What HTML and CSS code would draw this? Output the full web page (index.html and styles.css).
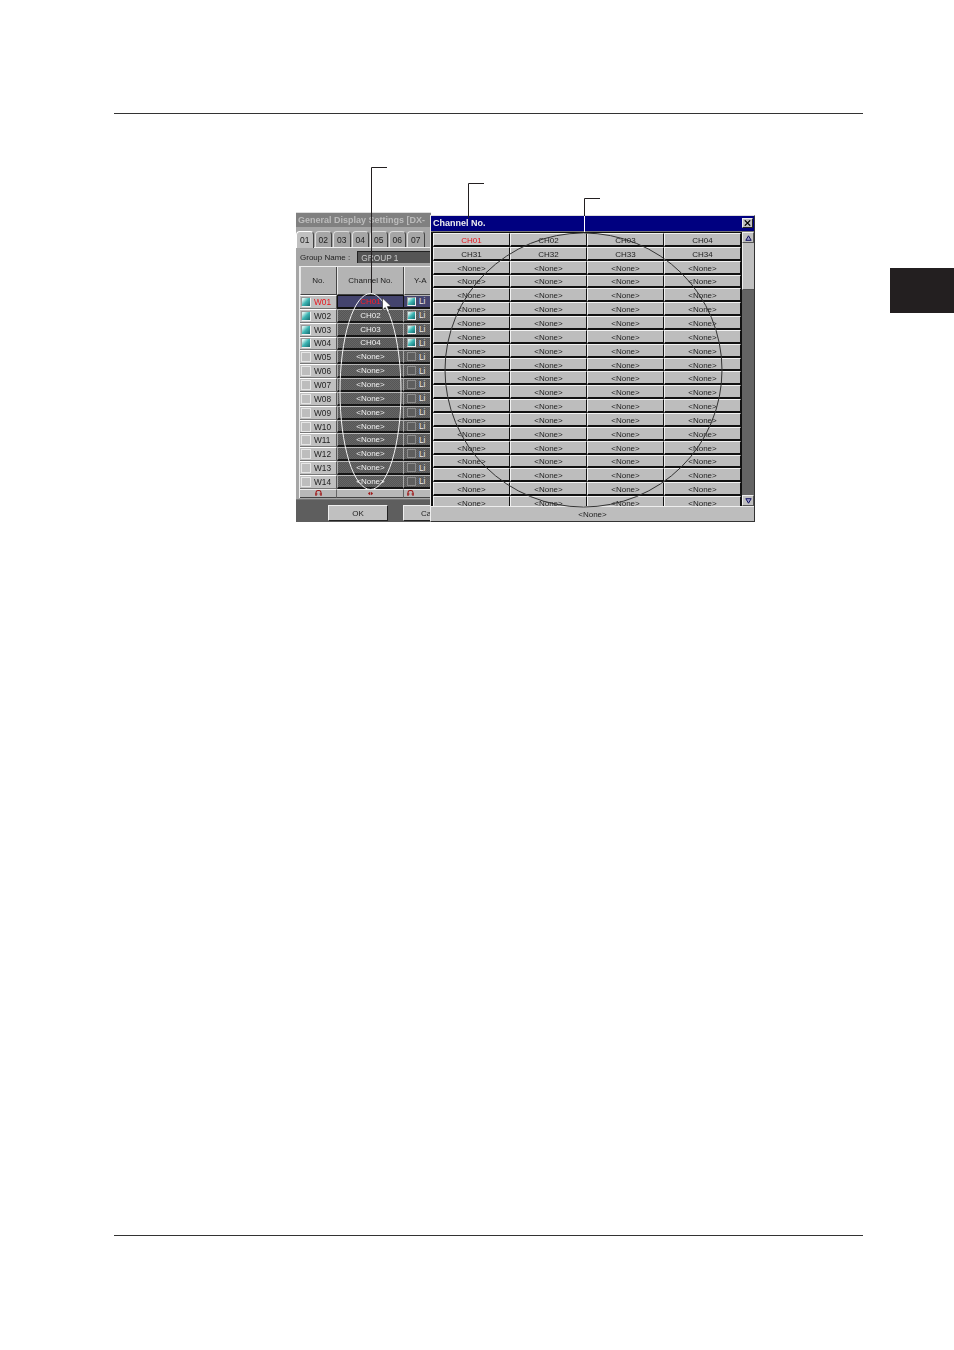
FILE: index.html
```html
<!DOCTYPE html>
<html lang="en">
<head>
<meta charset="utf-8">
<title>Channel No.</title>
<link rel="stylesheet" href="styles.css">
</head>
<body>
<div class="page">
  <div class="rule rule-top"></div>
  <div class="chapter-tab"></div>
  <div class="figure">
    <section class="win-settings">
      <div class="set-title">General Display Settings [DX-</div>
      <div class="set-body">
        <div class="tabs">
          <span class="tab tab-on">01</span><span class="tab">02</span><span class="tab">03</span><span class="tab">04</span><span class="tab">05</span><span class="tab">06</span><span class="tab">07</span>
        </div>
        <div class="group"><span class="group-label">Group Name :</span><span class="group-input">GROUP 1</span></div>
        <div class="table">
          <div class="th">No.</div><div class="th">Channel No.</div><div class="th">Y-A</div>
          <div class="no sel"><i class="cb on"></i>W01</div><div class="ch cur">CH01</div><div class="ya cur2"><i class="cb on"></i>Li</div>
          <div class="no"><i class="cb on"></i>W02</div><div class="ch">CH02</div><div class="ya"><i class="cb on"></i>Li</div>
          <div class="no"><i class="cb on"></i>W03</div><div class="ch">CH03</div><div class="ya"><i class="cb on"></i>Li</div>
          <div class="no"><i class="cb on"></i>W04</div><div class="ch">CH04</div><div class="ya"><i class="cb on"></i>Li</div>
          <div class="no"><i class="cb"></i>W05</div><div class="ch">&lt;None&gt;</div><div class="ya"><i class="cb off"></i>Li</div>
          <div class="no"><i class="cb"></i>W06</div><div class="ch">&lt;None&gt;</div><div class="ya"><i class="cb off"></i>Li</div>
          <div class="no"><i class="cb"></i>W07</div><div class="ch">&lt;None&gt;</div><div class="ya"><i class="cb off"></i>Li</div>
          <div class="no"><i class="cb"></i>W08</div><div class="ch">&lt;None&gt;</div><div class="ya"><i class="cb off"></i>Li</div>
          <div class="no"><i class="cb"></i>W09</div><div class="ch">&lt;None&gt;</div><div class="ya"><i class="cb off"></i>Li</div>
          <div class="no"><i class="cb"></i>W10</div><div class="ch">&lt;None&gt;</div><div class="ya"><i class="cb off"></i>Li</div>
          <div class="no"><i class="cb"></i>W11</div><div class="ch">&lt;None&gt;</div><div class="ya"><i class="cb off"></i>Li</div>
          <div class="no"><i class="cb"></i>W12</div><div class="ch">&lt;None&gt;</div><div class="ya"><i class="cb off"></i>Li</div>
          <div class="no"><i class="cb"></i>W13</div><div class="ch">&lt;None&gt;</div><div class="ya"><i class="cb off"></i>Li</div>
          <div class="no"><i class="cb"></i>W14</div><div class="ch">&lt;None&gt;</div><div class="ya"><i class="cb off"></i>Li</div>
          <div class="foot"><svg class="ico" viewBox="0 0 7 7"><path d="M1 6V2.500a2.500 2 0 0 1 5 0V6M0 4h2.500M4.500 4H7"/></svg></div>
          <div class="foot"><svg class="ico" viewBox="0 0 7 7"><path d="M3 2 1 3.500 3 5zM4 2l2 1.500L4 5z"/></svg></div>
          <div class="foot"><svg class="ico" viewBox="0 0 7 7"><path d="M1 6V2.500a2.500 2 0 0 1 5 0V6M0 4h2.500M4.500 4H7"/></svg></div>
        </div>
      </div>
      <div class="set-actions"><span class="btn btn-ok">OK</span><span class="btn btn-cut">Ca</span></div>
    </section>

    <section class="win-channel">
      <div class="ch-title"><span>Channel No.</span><span class="close"><svg viewBox="0 0 9 7"><path d="M1 0l7 7M8 0 1 7"/></svg></span></div>
      <div class="ch-main">
        <div class="ch-grid">
          <div class="cell cell-sel">CH01</div><div class="cell">CH02</div><div class="cell">CH03</div><div class="cell">CH04</div>
          <div class="cell">CH31</div><div class="cell">CH32</div><div class="cell">CH33</div><div class="cell">CH34</div>
          <div class="cell">&lt;None&gt;</div><div class="cell">&lt;None&gt;</div><div class="cell">&lt;None&gt;</div><div class="cell">&lt;None&gt;</div>
          <div class="cell">&lt;None&gt;</div><div class="cell">&lt;None&gt;</div><div class="cell">&lt;None&gt;</div><div class="cell">&lt;None&gt;</div>
          <div class="cell">&lt;None&gt;</div><div class="cell">&lt;None&gt;</div><div class="cell">&lt;None&gt;</div><div class="cell">&lt;None&gt;</div>
          <div class="cell">&lt;None&gt;</div><div class="cell">&lt;None&gt;</div><div class="cell">&lt;None&gt;</div><div class="cell">&lt;None&gt;</div>
          <div class="cell">&lt;None&gt;</div><div class="cell">&lt;None&gt;</div><div class="cell">&lt;None&gt;</div><div class="cell">&lt;None&gt;</div>
          <div class="cell">&lt;None&gt;</div><div class="cell">&lt;None&gt;</div><div class="cell">&lt;None&gt;</div><div class="cell">&lt;None&gt;</div>
          <div class="cell">&lt;None&gt;</div><div class="cell">&lt;None&gt;</div><div class="cell">&lt;None&gt;</div><div class="cell">&lt;None&gt;</div>
          <div class="cell">&lt;None&gt;</div><div class="cell">&lt;None&gt;</div><div class="cell">&lt;None&gt;</div><div class="cell">&lt;None&gt;</div>
          <div class="cell">&lt;None&gt;</div><div class="cell">&lt;None&gt;</div><div class="cell">&lt;None&gt;</div><div class="cell">&lt;None&gt;</div>
          <div class="cell">&lt;None&gt;</div><div class="cell">&lt;None&gt;</div><div class="cell">&lt;None&gt;</div><div class="cell">&lt;None&gt;</div>
          <div class="cell">&lt;None&gt;</div><div class="cell">&lt;None&gt;</div><div class="cell">&lt;None&gt;</div><div class="cell">&lt;None&gt;</div>
          <div class="cell">&lt;None&gt;</div><div class="cell">&lt;None&gt;</div><div class="cell">&lt;None&gt;</div><div class="cell">&lt;None&gt;</div>
          <div class="cell">&lt;None&gt;</div><div class="cell">&lt;None&gt;</div><div class="cell">&lt;None&gt;</div><div class="cell">&lt;None&gt;</div>
          <div class="cell">&lt;None&gt;</div><div class="cell">&lt;None&gt;</div><div class="cell">&lt;None&gt;</div><div class="cell">&lt;None&gt;</div>
          <div class="cell">&lt;None&gt;</div><div class="cell">&lt;None&gt;</div><div class="cell">&lt;None&gt;</div><div class="cell">&lt;None&gt;</div>
          <div class="cell">&lt;None&gt;</div><div class="cell">&lt;None&gt;</div><div class="cell">&lt;None&gt;</div><div class="cell">&lt;None&gt;</div>
          <div class="cell">&lt;None&gt;</div><div class="cell">&lt;None&gt;</div><div class="cell">&lt;None&gt;</div><div class="cell">&lt;None&gt;</div>
          <div class="cell">&lt;None&gt;</div><div class="cell">&lt;None&gt;</div><div class="cell">&lt;None&gt;</div><div class="cell">&lt;None&gt;</div>
        </div>
        <div class="scroll">
          <span class="sb-btn"><svg viewBox="0 0 7 6"><path d="M3.500 .8 6.200 5.300H.8z"/></svg></span>
          <span class="sb-thumb"></span>
          <span class="sb-track"></span>
          <span class="sb-btn"><svg viewBox="0 0 7 6"><path d="M.8 .7H6.200L3.500 5.200z"/></svg></span>
        </div>
      </div>
      <div class="ch-none">&lt;None&gt;</div>
    </section>

    <svg class="overlay" viewBox="0 0 954 1350" aria-hidden="true">
      <ellipse class="ring-white" cx="370.500" cy="391.500" rx="30.500" ry="98"/>
      <ellipse class="ring-black" cx="583.500" cy="370" rx="138.500" ry="137"/>
      <path class="lead" d="M387 167.500H371.500V293"/>
      <path class="lead" d="M484 183.500H468.500V218"/>
      <path class="lead" d="M600 198.500H584.500V216"/>
      <path class="lead-white" d="M584.500 216V232"/>
      <path class="pointer" d="M382.500 298v12l2.700-2.600 2.300 5 2-1-2.200-4.800 3.700-.3z"/>
    </svg>
  </div>
  <div class="rule rule-bottom"></div>
</div>
</body>
</html>
```
FILE: styles.css
```css
* { box-sizing: border-box; }
html, body { margin: 0; padding: 0; background: #fff; }
body { font-family: "Liberation Sans", Arial, sans-serif; color: #222; }
.page { position: relative; width: 954px; height: 1350px; padding-top: 113px; overflow: hidden; }
.rule { width: 749px; height: 1px; margin-left: 114px; background: #333; }
.rule-bottom { margin-top: 1121px; }
.chapter-tab { position: absolute; left: 890px; top: 268px; width: 64px; height: 45px; background: #231f20; }
.figure { position: absolute; left: 0; top: 0; width: 954px; height: 1350px; }

/* settings window (behind) */
.win-settings { position: absolute; left: 296px; top: 212px; width: 135px; height: 310px; overflow: hidden; background: #5e5e5e; font-size: 8.300px; display: flex; flex-direction: column; border-top: 1px solid #ddd; }
.set-title { height: 14px; line-height: 14px; padding-left: 2px; background: #808080; color: #bcbcbc; font-size: 9px; font-weight: 700; white-space: nowrap; filter: blur(.3px); }
.set-body { background: #a6a6a6; height: 273px; padding: 4px 0 0; border-bottom: 1px solid #777; }
.tabs { display: flex; height: 17px; gap: 1px; border-bottom: 1px solid #eee; }
.tab { width: 17.500px; height: 16px; line-height: 16px; text-align: center; background: #a6a6a6; border: 1px solid #dcdcdc; border-bottom: 0; border-right-color: #444; border-radius: 4px 4px 0 0; font-size: 8.500px; color: #222; filter: blur(.25px); }
.tab-on { height: 17px; background: #c0c0c0; border-color: #fff #444 #c0c0c0 #fff; }
.group { display: flex; align-items: center; height: 19px; padding: 0 0 1px 4px; gap: 7px; white-space: nowrap; }
.group-label { font-size: 8px; filter: blur(.25px); }
.group-input { flex: 1; height: 12px; line-height: 12px; padding-left: 3px; background: #555; color: #ccc; font-size: 8.300px; border-top: 1px solid #222; border-left: 1px solid #222; filter: blur(.2px); }
.table { display: grid; grid-template-columns: 37px 67px 27px; grid-template-rows: 28px repeat(14, 13.850px) 9px; margin: -1px 0 0 3px; border-top: 1px solid #eee; border-left: 1px solid #eee; }
.th { display: flex; align-items: center; justify-content: center; background: #b4b4b4; border-right: 1px solid #444; border-bottom: 1px solid #444; border-left: 1px solid #e8e8e8; font-size: 8px; white-space: nowrap; filter: blur(.25px); }
.th:nth-child(3) { justify-content: flex-start; padding-left: 9px; }
.no { display: flex; align-items: center; gap: 3px; padding-left: 1px; background: #c0c0c0; border-top: 1px solid #fff; border-bottom: 1px solid #777; border-right: 1px solid #555; font-size: 8.300px; color: #222; filter: blur(.25px); }
.no.sel { color: #e8141c; }
.cb { display: inline-block; flex: none; width: 10px; height: 10px; border: 1px solid #e6e6e6; background: #bdbdbd; }
.cb.on { border-color: #9a9a9a #f0f0f0 #f0f0f0 #9a9a9a; background: linear-gradient(135deg, #d5f2ef 0 15%, #3db5b3 50%, #16696f 100%); }
.cb.off { border-color: #8c8c8c; background: #5e5e5e; }
.ch { display: flex; align-items: center; justify-content: center; background: #5c5c5c repeating-conic-gradient(#565656 0 25%, #666 0 50%) 0 0 / 2px 2px; border-top: 1px solid #b5b5b5; border-bottom: 2px solid #161616; border-left: 1px solid #aaa; border-right: 1px solid #aaa; color: #f0f0f0; font-size: 8px; filter: blur(.2px); }
.ch.cur { background: #44446e; color: #ff1c24; border: 1px solid #111; border-bottom-width: 2px; }
.ya { display: flex; align-items: center; gap: 3px; padding-left: 3px; background: #5c5c5c repeating-conic-gradient(#565656 0 25%, #666 0 50%) 0 0 / 2px 2px; border-top: 1px solid #b5b5b5; border-bottom: 2px solid #161616; color: #e8e8e8; font-size: 8.300px; white-space: nowrap; }
.ya .cb { width: 9px; height: 9px; }
.ya.cur2 { background: #44446e; }
.foot { display: flex; align-items: center; justify-content: center; background: #b8b8b8; border-top: 1px solid #eee; border-right: 1px solid #666; border-bottom: 1px solid #444; }
.foot:nth-last-child(1) { justify-content: flex-start; padding-left: 3px; }
.ico { width: 7px; height: 7px; fill: #a01818; stroke: #a01818; stroke-width: 1.100; }
.foot:nth-last-child(2) .ico { stroke-width: .3; }
.foot:nth-last-child(1) .ico, .foot:nth-last-child(3) .ico { fill: none; }
.set-actions { display: flex; flex: 1; gap: 15px; padding: 5px 0 0 32px; background: #5e5e5e; }
.btn { flex: none; width: 60px; height: 16px; line-height: 15px; text-align: center; background: #c0c0c0; border: 1px solid; border-color: #eee #222 #222 #eee; font-size: 8px; filter: blur(.25px); }
.btn-cut { width: 28px; text-align: left; padding-left: 17px; border-right: 0; }

/* channel picker (front) */
.win-channel { position: absolute; left: 430px; top: 215px; width: 325px; height: 307px; background: #c0c0c0; display: flex; flex-direction: column; border-left: 1px solid #eee; border-top: 1px solid #ddd; border-right: 1px solid #333; border-bottom: 1px solid #333; }
.ch-title { display: flex; align-items: center; justify-content: space-between; height: 15px; padding: 0 1px 1px 2px; background: #000080; color: #eee; font-size: 9px; font-weight: 700; white-space: nowrap; flex: none; }
.ch-title span:first-child { filter: blur(.25px); }
.close { display: flex; align-items: center; justify-content: center; width: 11px; height: 10px; background: #c0c0c0; border: 1px solid; border-color: #eee #222 #222 #eee; }
.close svg { width: 7px; height: 6px; fill: none; stroke: #000; stroke-width: 1.500; }
.ch-main { display: flex; flex: none; height: 275px; background: #3c3c3c; border-top: 1px solid #777; }
.ch-grid { flex: none; width: 311px; height: 274px; overflow: hidden; display: grid; grid-template-columns: repeat(4, 77px); grid-auto-rows: 13.850px; padding: 1px 0 0 2px; background: #111; }
.cell { display: flex; align-items: center; justify-content: center; padding-top: 2px; background: #bdbdbd; border-top: 1px solid #f2f2f2; border-left: 1px solid #f2f2f2; border-right: 1px solid #111; border-bottom: 2px solid #111; font-size: 8px; color: #222; filter: blur(.25px); }
.cell-sel { color: #e8141c; background: #c6c6c6; }
.scroll { flex: 1; display: flex; flex-direction: column; background: #5e5e5e; }
.sb-btn { flex: none; height: 11px; display: flex; align-items: center; justify-content: center; background: #c0c0c0; border: 1px solid; border-color: #eee #555 #555 #eee; }
.sb-btn svg { width: 7px; height: 6px; fill: #9c9cc6; stroke: #101060; stroke-width: 1; }
.sb-thumb { flex: none; height: 47px; background: #c0c0c0; border-left: 1px solid #eee; border-bottom: 1px solid #555; }
.sb-track { flex: 1; background: #646464; }
.ch-none { flex: 1; display: flex; align-items: center; justify-content: center; font-size: 8px; background: #bdbdbd; border-top: 1px solid #eee; filter: blur(.25px); }

/* annotation overlay */
.overlay { position: absolute; left: 0; top: 0; width: 954px; height: 1350px; pointer-events: none; }
.ring-white { fill: none; stroke: #f4f4f4; stroke-width: 1; }
.ring-black { fill: none; stroke: #333; stroke-width: 1; }
.lead { fill: none; stroke: #231f20; stroke-width: 1; }
.lead-white { fill: none; stroke: #fff; stroke-width: 1; }
.pointer { fill: #fff; stroke: #222; stroke-width: .6; }
```
